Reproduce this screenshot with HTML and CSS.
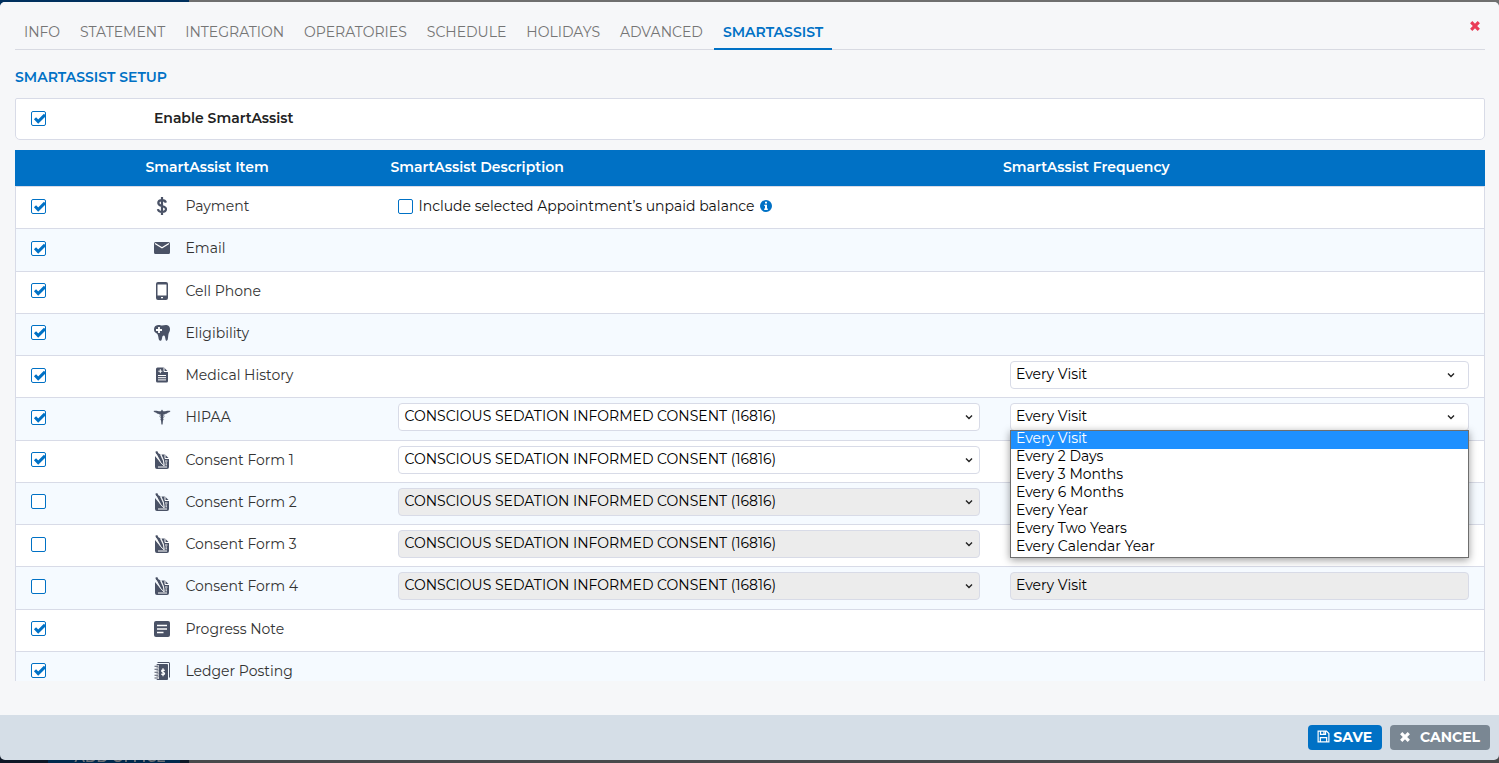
FILE: index.html
```html
<!DOCTYPE html>
<html lang="en">
<head>
<meta charset="utf-8">
<title>SmartAssist Setup</title>
<link rel="stylesheet" href="styles.css">
</head>
<body>
<svg class="sprite" aria-hidden="true">
  <symbol id="i-dollar" viewBox="0 0 18 18"><path d="M9 0v18M12.900 5.600C12.400 3.800 11 3.100 9 3.100 6.700 3.100 5.300 4.200 5.300 5.900c0 4.100 7.700 2 7.700 6.200 0 1.800-1.600 2.900-4 2.900-2.200 0-3.700-.9-4.100-2.900" fill="none" stroke="currentColor" stroke-width="2.200"/></symbol>
  <symbol id="i-mail" viewBox="0 0 18 18"><path d="M2.500 3h13A1.500 1.500 0 0 1 17 4.500v9a1.500 1.500 0 0 1-1.500 1.500h-13A1.500 1.500 0 0 1 1 13.500v-9A1.500 1.500 0 0 1 2.500 3z"/><path d="M2 4.500l7 4.300 7-4.300" fill="none" stroke="#fff" stroke-width="1.300"/></symbol>
  <symbol id="i-phone" viewBox="0 0 18 18"><path fill-rule="evenodd" d="M5 0h8a2 2 0 0 1 2 2v14a2 2 0 0 1-2 2H5a2 2 0 0 1-2-2V2a2 2 0 0 1 2-2zM4.500 2.500v11h9v-11zM8 15v1.300h2V15z"/></symbol>
  <symbol id="i-tooth" viewBox="0 0 18 18"><path d="M5 1c2-.3 2.500.6 4 .6S12 .7 13.500 1C16 1.300 17 3.200 17 5.300c0 2.200-1.200 3.200-1.600 5.200-.4 2.200-.2 6.300-1.800 6.300-1.500 0-1-3.900-2.200-5.100-.5-.5-1.300-.4-1.700.2-.9 1.400-.6 4.900-2.200 4.900-1.500 0-1.800-1.500-2.100-3.500C5 11.200 4.900 10 3 9 1.500 8.200 1 6.800 1 5.200 1 3 2.500 1.200 5 1z"/><path d="M6 3v6M3 6h6" stroke="#fff" stroke-width="1.800" fill="none"/></symbol>
  <symbol id="i-medical" viewBox="0 0 18 18"><path d="M4.500 1.500H11l4 4V15a1.500 1.500 0 0 1-1.500 1.500h-9A1.500 1.500 0 0 1 3 15V3a1.500 1.500 0 0 1 1.500-1.500z"/><path d="M11 1.500v4h4M7.300 3.200v4M5.300 5.200h4M5 9.500h8M5 11.700h8M5 13.900h8" fill="none" stroke="#fff" stroke-width="1"/></symbol>
  <symbol id="i-caduceus" viewBox="0 0 18 18"><path d="M.5 3c3-.8 5.500.7 7.300.2L9 1.500l1.200 1.700c1.800.5 4.300-1 7.300-.2-.7 1.200-1.700 1.400-2.500 1.500-.5.900-1.500 1.200-2.300 1.200-.6.800-1.500.8-2.200.6L9.600 16.500H8.400L7.500 6.300c-.7.200-1.600.2-2.200-.6-.8 0-1.800-.3-2.300-1.200C2.200 4.400 1.200 4.200.5 3z"/><path d="M9 6c-3.500 1.800-2.500 3.500 0 4.200 2.200.7 1.800 2 0 2.800M9 6c3.500 1.800 2.500 3.500 0 4.200-2.200.7-1.800 2 0 2.800" fill="none" stroke="currentColor" stroke-width=".5"/></symbol>
  <symbol id="i-consent" viewBox="0 0 18 18"><path d="M2 5v11a2 2 0 0 0 2 2h10a2 2 0 0 0 2-2V7.500L12 3.500H8.500l2.500 6 .4 5.500L7 11z"/><path d="M12 3.500v4h4M12 10h2.500M12.500 12H14M12.500 13.800H14M5 16h9" fill="none" stroke="#fff" stroke-width="1"/><path d="M2.300.8L4.200 0l1.200 2.300 2.200 1.200 3 6.500.5 4.700-3.300-3-4.300-8z"/><path d="M3.300 3.200l4.600 8.600 3.200 3L10.500 10 7.500 3.600" stroke="#fff" stroke-width=".9" fill="none"/></symbol>
  <symbol id="i-note" viewBox="0 0 18 18"><rect x="1" y="1" width="16" height="16" rx="2"/><path d="M4 5.500h10M4 9h10M4 12.500h6.500" stroke="#fff" stroke-width="1.700" fill="none"/></symbol>
  <symbol id="i-ledger" viewBox="0 0 18 18"><path d="M5 0h10.500A1.500 1.500 0 0 1 17 1.500V15l-1 1V1H4z"/><path d="M4.500 2H14a1 1 0 0 1 1 1v14a1 1 0 0 1-1 1H4.500a1 1 0 0 1-1-1V3a1 1 0 0 1 1-1z"/><path d="M1.500 4.300H6M1.500 7.300H6M1.500 10.300H6M1.500 13.300H6M1.500 16H6" stroke="#fff" stroke-width="2.200"/><path d="M1.500 4.300h4M1.500 7.300h4M1.500 10.300h4M1.500 13.300h4M1.500 16h4" stroke="currentColor" stroke-width="1.100"/><path d="M10 6.300v8M11.600 8.700c-.5-1-3-1.200-3 .2s3 1.200 3 2.600-2.600 1.400-3.200.2" fill="none" stroke="#fff" stroke-width="1.200"/></symbol>
  <symbol id="i-times" viewBox="0 0 12 12"><path d="M2.200 2.200l7.600 7.600M9.800 2.200L2.200 9.800" stroke="currentColor" stroke-width="3.200" fill="none"/></symbol>
  <symbol id="i-save" viewBox="0 0 14 14"><path d="M1.200 1.200h9l2.600 2.600v9H1.200zM3.800 1.200v3.600h5.400V1.200M3.600 12.800V8.200h6.800v4.600M7.500 2v2" fill="none" stroke="currentColor" stroke-width="1.300"/></symbol>
  <symbol id="i-info" viewBox="0 0 12 12"><circle cx="6" cy="6" r="6"/><path d="M5 1.800h2v1.800H5zM4.300 4.700H7v3.900h.8v1.300H4.200V8.600H5V6h-.7z" fill="#fff"/></symbol>
</svg>

<div class="backdrop" aria-hidden="true">
  <div class="side"><button class="add" type="button" tabindex="-1">+ ADD OFFICE</button></div>
</div>

<div class="modal" role="dialog" aria-label="SmartAssist setup">
  <main class="content">
    <header class="top">
      <nav class="tabs">
        <a href="#info">INFO</a>
        <a href="#statement">STATEMENT</a>
        <a href="#integration">INTEGRATION</a>
        <a href="#operatories">OPERATORIES</a>
        <a href="#schedule">SCHEDULE</a>
        <a href="#holidays">HOLIDAYS</a>
        <a href="#advanced">ADVANCED</a>
        <a href="#smartassist" class="active" aria-current="page">SMARTASSIST</a>
      </nav>
      <button class="close" type="button" aria-label="Close"><svg><use href="#i-times"/></svg></button>
    </header>
    <h1>SMARTASSIST SETUP</h1>
    <div class="enable">
      <input class="check" type="checkbox" id="enable" checked>
      <label for="enable">Enable SmartAssist</label>
    </div>
    <div class="scroll">
      <table class="items">
        <thead>
          <tr><th class="c1"></th><th class="c2">SmartAssist Item</th><th class="c3">SmartAssist Description</th><th class="c4">SmartAssist Frequency</th></tr>
        </thead>
        <tbody>
          <tr>
            <td><input class="check" type="checkbox" id="r1" checked></td>
            <td><label class="item" for="r1"><svg><use href="#i-dollar"/></svg>Payment</label></td>
            <td><span class="include"><input class="check" type="checkbox" id="unpaid"><label for="unpaid">Include selected Appointment’s unpaid balance</label><svg><use href="#i-info"/></svg></span></td>
            <td></td>
          </tr>
          <tr>
            <td><input class="check" type="checkbox" id="r2" checked></td>
            <td><label class="item" for="r2"><svg><use href="#i-mail"/></svg>Email</label></td>
            <td></td><td></td>
          </tr>
          <tr>
            <td><input class="check" type="checkbox" id="r3" checked></td>
            <td><label class="item" for="r3"><svg><use href="#i-phone"/></svg>Cell Phone</label></td>
            <td></td><td></td>
          </tr>
          <tr>
            <td><input class="check" type="checkbox" id="r4" checked></td>
            <td><label class="item" for="r4"><svg><use href="#i-tooth"/></svg>Eligibility</label></td>
            <td></td><td></td>
          </tr>
          <tr>
            <td><input class="check" type="checkbox" id="r5" checked></td>
            <td><label class="item" for="r5"><svg><use href="#i-medical"/></svg>Medical History</label></td>
            <td></td>
            <td><select class="freq" aria-label="Medical History frequency"><option>Every Visit</option></select></td>
          </tr>
          <tr>
            <td><input class="check" type="checkbox" id="r6" checked></td>
            <td><label class="item" for="r6"><svg><use href="#i-caduceus"/></svg>HIPAA</label></td>
            <td><select aria-label="HIPAA form"><option>CONSCIOUS SEDATION INFORMED CONSENT (16816)</option></select></td>
            <td>
              <div class="dropdown">
                <select class="freq" aria-label="HIPAA frequency"><option>Every Visit</option></select>
                <ul class="menu" role="listbox" aria-label="HIPAA frequency options">
                  <li role="option" aria-selected="true">Every Visit</li>
                  <li role="option">Every 2 Days</li>
                  <li role="option">Every 3 Months</li>
                  <li role="option">Every 6 Months</li>
                  <li role="option">Every Year</li>
                  <li role="option">Every Two Years</li>
                  <li role="option">Every Calendar Year</li>
                </ul>
              </div>
            </td>
          </tr>
          <tr>
            <td><input class="check" type="checkbox" id="r7" checked></td>
            <td><label class="item" for="r7"><svg><use href="#i-consent"/></svg>Consent Form 1</label></td>
            <td><select aria-label="Consent Form 1 form"><option>CONSCIOUS SEDATION INFORMED CONSENT (16816)</option></select></td>
            <td></td>
          </tr>
          <tr>
            <td><input class="check" type="checkbox" id="r8"></td>
            <td><label class="item" for="r8"><svg><use href="#i-consent"/></svg>Consent Form 2</label></td>
            <td><select disabled aria-label="Consent Form 2 form"><option>CONSCIOUS SEDATION INFORMED CONSENT (16816)</option></select></td>
            <td></td>
          </tr>
          <tr>
            <td><input class="check" type="checkbox" id="r9"></td>
            <td><label class="item" for="r9"><svg><use href="#i-consent"/></svg>Consent Form 3</label></td>
            <td><select disabled aria-label="Consent Form 3 form"><option>CONSCIOUS SEDATION INFORMED CONSENT (16816)</option></select></td>
            <td></td>
          </tr>
          <tr>
            <td><input class="check" type="checkbox" id="r10"></td>
            <td><label class="item" for="r10"><svg><use href="#i-consent"/></svg>Consent Form 4</label></td>
            <td><select disabled aria-label="Consent Form 4 form"><option>CONSCIOUS SEDATION INFORMED CONSENT (16816)</option></select></td>
            <td><select class="plain" disabled aria-label="Consent Form 4 frequency"><option>Every Visit</option></select></td>
          </tr>
          <tr>
            <td><input class="check" type="checkbox" id="r11" checked></td>
            <td><label class="item" for="r11"><svg><use href="#i-note"/></svg>Progress Note</label></td>
            <td></td><td></td>
          </tr>
          <tr>
            <td><input class="check" type="checkbox" id="r12" checked></td>
            <td><label class="item" for="r12"><svg><use href="#i-ledger"/></svg>Ledger Posting</label></td>
            <td></td><td></td>
          </tr>
        </tbody>
      </table>
    </div>
  </main>
  <footer class="actions">
    <button class="btn save" type="button"><svg><use href="#i-save"/></svg>SAVE</button>
    <button class="btn cancel" type="button"><svg><use href="#i-times"/></svg>CANCEL</button>
  </footer>
</div>
</body>
</html>
```

FILE: styles.css
```css
* { box-sizing: border-box; }

body {
  margin: 0;
  height: 100vh;
  overflow: hidden;
  padding: 2px 0 3px;
  font-family: Montserrat, Inter, "Liberation Sans", sans-serif;
  font-size: 14px;
  line-height: 20px;
  color: #333;
}

button, select, input { font: inherit; margin: 0; }

svg { fill: currentColor; flex: none; }
.sprite { position: absolute; width: 0; height: 0; }

/* Dimmed page behind the dialog */
.backdrop {
  position: fixed;
  inset: 0;
  background: linear-gradient(#6f6f6f 50%, #48494b 50%);
}
.side {
  width: 189px;
  height: 100%;
  display: flex;
  align-items: flex-end;
  padding-left: 48px;
  background: linear-gradient(#00305e 50%, #0e1726 50%);
}
.add {
  width: 132px;
  height: 18px;
  padding: 7px 0 0;
  border: 0;
  background: #00294d;
  color: #6c7075;
  line-height: 11px;
  font-weight: 600;
}

.modal {
  position: relative;
  height: 100%;
  display: flex;
  flex-direction: column;
  border-radius: 5px;
  overflow: hidden;
  background: #d5dee7;
}
.content {
  flex: 1;
  min-height: 0;
  display: flex;
  flex-direction: column;
  padding: 0 14px 34px 15px;
  background: #f6f7f9;
}

.top {
  display: flex;
  justify-content: space-between;
  height: 48px;
  border-bottom: 1px solid #d8dae2;
}
.tabs { display: flex; gap: 2px; }
.tabs a {
  margin-bottom: -1px;
  padding: 20px 9px 0;
  color: #757575;
  text-decoration: none;
}
.tabs .active {
  color: #0071c5;
  font-weight: 600;
  border-bottom: 2px solid #0071c5;
}
.close {
  align-self: flex-start;
  display: flex;
  margin: 18px 4px 0;
  padding: 0;
  border: 0;
  background: none;
  color: #ea3d58;
}
.close svg { width: 12px; height: 12px; }

h1 {
  margin: 0;
  padding: 17px 0 11px;
  color: #0071c5;
  font-size: 14px;
  line-height: 20px;
  font-weight: 600;
}

.enable {
  display: grid;
  grid-template-columns: 1fr 11fr;
  column-gap: 2px;
  align-items: center;
  height: 42px;
  margin-bottom: 10px;
  padding: 0 0 2px 15px;
  background: #fff;
  border: 1px solid #d8dbe7;
  border-radius: 2px 2px 5px 5px;
  color: #222;
  font-weight: 600;
}

.check {
  appearance: none;
  display: block;
  flex: none;
  width: 15px;
  height: 15px;
  border: 1px solid #0071c5;
  border-radius: 2px;
  background: #fff;
}
.check:checked {
  background: #fff url("data:image/svg+xml,%3Csvg xmlns='http://www.w3.org/2000/svg' viewBox='0 0 13 13'%3E%3Cpath d='M3 6.200l3.200 3.300L13 2.800' fill='none' stroke='%230071c5' stroke-width='3'/%3E%3C/svg%3E") center / 13px 13px no-repeat;
}

.scroll {
  flex: 1;
  min-height: 0;
  overflow: auto;
  scrollbar-width: none;
}
.items {
  width: 100%;
  height: 544px;
  table-layout: fixed;
  border-collapse: separate;
  border-spacing: 0;
}
th {
  height: 37px;
  padding: 0 8px 2px;
  background: #0071c5;
  border-bottom: 1px solid #d8dbe7;
  color: #fff;
  text-align: left;
  font-weight: 600;
}
.c1 { width: 8.33%; }
.c2 { width: 16.67%; }
.c3 { width: 41.67%; }
td {
  height: 42px;
  padding: 0 15px 3px 16px;
  background: #fff;
  border-bottom: 1px solid #d8dbe7;
}
tbody tr:nth-child(even) td { background: #f5faff; }
td:first-child { padding-left: 15px; border-left: 1px solid #d8dbe7; }
td:last-child { padding-left: 15px; border-right: 1px solid #d8dbe7; }

.item { display: flex; align-items: center; gap: 14px; }
.item svg { width: 18px; height: 18px; color: #4a5266; }
.include { display: flex; align-items: center; gap: 5px; color: #111; }
.include svg { width: 12px; height: 12px; color: #0071c5; }

select {
  appearance: none;
  display: block;
  width: 100%;
  height: 28px;
  padding: 0 24px 2px 5px;
  border: 1px solid #d8dbe7;
  border-radius: 4px;
  color: #000;
  background: #fff url("data:image/svg+xml,%3Csvg xmlns='http://www.w3.org/2000/svg' viewBox='0 0 8 8'%3E%3Cpath d='M1 2.500l3 3 3-3' fill='none' stroke='%23222' stroke-width='1.400'/%3E%3C/svg%3E") right 6px center / 8px 8px no-repeat;
}
select:disabled { background-color: #ececec; color: #000; opacity: 1; }
select.freq { background-position: right 13px center; }
select.plain { background-image: none; }

.dropdown { position: relative; }
.menu {
  position: absolute;
  z-index: 2;
  top: 27px;
  left: 0;
  right: 0;
  margin: 0;
  padding: 0;
  list-style: none;
  background: #fff;
  border: 1px solid #6e6e6e;
  box-shadow: 0 2px 8px rgba(0, 0, 0, .4);
  color: #000;
}
.menu li { padding: 0 5px 4px; line-height: 14px; }
.menu li[aria-selected="true"] { background: #1e90ff; color: #fff; }

.actions {
  display: flex;
  justify-content: flex-end;
  gap: 8px;
  padding: 10px 9px;
}
.btn {
  display: flex;
  align-items: center;
  height: 25px;
  padding: 0 10px 2px 9px;
  border: 0;
  border-radius: 4px;
  color: #fff;
  font-weight: 700;
}
.save { gap: 3px; background: #0071c5; }
.save svg { width: 13px; height: 13px; }
.cancel { gap: 9px; background: #7a8793; }
.cancel svg { width: 12px; height: 12px; }
```
